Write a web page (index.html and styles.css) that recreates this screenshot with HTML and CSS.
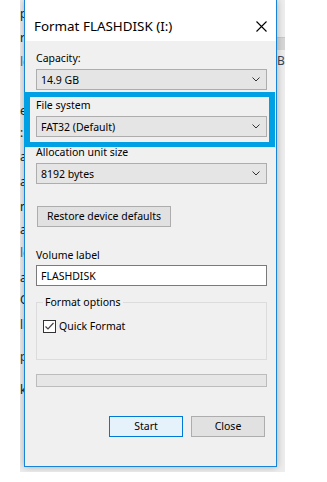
FILE: index.html
```html
<!DOCTYPE html>
<html lang="en">

<head>
    <meta charset="UTF-8">
    <meta name="viewport" content="width=device-width, initial-scale=1">
    <title>Format FLASHDISK (I:)</title>
    <link rel="stylesheet" href="styles.css">
</head>

<body>
<div class="desk">
    <!-- window behind the dialog, only its edges show -->
    <div class="peek-left">
        <span>p</span>
        <span>r</span>
        <span class="link">lc</span>
        <span>e</span>
        <span>:</span>
        <span>a</span>
        <span>a</span>
        <span>n</span>
        <span>a</span>
        <span class="link">lc</span>
        <span>a</span>
        <span>O</span>
        <span class="warn">ll</span>
        <span class="warn">p|</span>
        <span>k</span>
    </div>

    <div class="dialog">
        <div class="dialog-title">
            <span>Format FLASHDISK (I:)</span>
            <svg class="closeTag" width="11" height="11" viewBox="0 0 11 11">
                <path d="M0.5 0.5 L10.5 10.5 M10.5 0.5 L0.5 10.5" stroke="#000" stroke-width="1.1" fill="none"/>
            </svg>
        </div>

        <div class="dialog-content">
            <div class="field">
                <div class="label">Capacity:</div>
                <div class="combo">
                    <span>14.9 GB</span>
                    <svg width="8" height="5" viewBox="0 0 8 5"><polyline points="0.5,0.5 4,4 7.5,0.5" fill="none" stroke="#333" stroke-width="1"/></svg>
                </div>
            </div>

            <div class="field marked">
                <div class="label">File system</div>
                <div class="combo">
                    <span>FAT32 (Default)</span>
                    <svg width="8" height="5" viewBox="0 0 8 5"><polyline points="0.5,0.5 4,4 7.5,0.5" fill="none" stroke="#333" stroke-width="1"/></svg>
                </div>
            </div>

            <div class="field">
                <div class="label">Allocation unit size</div>
                <div class="combo">
                    <span>8192 bytes</span>
                    <svg width="8" height="5" viewBox="0 0 8 5"><polyline points="0.5,0.5 4,4 7.5,0.5" fill="none" stroke="#333" stroke-width="1"/></svg>
                </div>
            </div>

            <button class="btn restore">Restore device defaults</button>

            <div class="label volume">Volume label</div>
            <div class="textbox">FLASHDISK</div>

            <fieldset class="options">
                <legend>Format options</legend>
                <label class="check">
                    <svg width="13" height="13" viewBox="0 0 13 13">
                        <rect x="0.5" y="0.5" width="12" height="12" fill="#fff" stroke="#333"/>
                        <polyline points="2.5,6.5 5,9 10.5,3" fill="none" stroke="#444" stroke-width="1.2"/>
                    </svg>
                    Quick Format
                </label>
            </fieldset>

            <div class="progress"></div>

            <div class="actions">
                <button class="btn start">Start</button>
                <button class="btn">Close</button>
            </div>
        </div>
    </div>

    <div class="peek-right">
        <div class="band"></div>
        <span>B</span>
    </div>
</div>
</body>

</html>
```

FILE: styles.css
```css
body {
    margin: 0;
    background-color: #fff;
    font-family: "Noto Sans", "Liberation Sans", sans-serif;
    font-size: 10.5px;
    color: #000;
}

.desk {
    width: 265px;
    height: 472px;
    margin-left: 20px;
    background-color: #ededed;
    display: flex;
    overflow: hidden;
}

/* left edge of the window underneath */
.peek-left {
    width: 4px;
    flex-shrink: 0;
    overflow: hidden;
    padding-top: 7px;
    display: flex;
    flex-direction: column;
    font-size: 12px;
    line-height: 14px;
    color: #222;
}

.peek-left span {
    white-space: nowrap;
}

.peek-left span:nth-child(1) { height: 24px; }
.peek-left span:nth-child(2) { height: 24px; }
.peek-left span:nth-child(3) { height: 49px; }
.peek-left span:nth-child(4) { height: 22px; }
.peek-left span:nth-child(5) { height: 24px; }
.peek-left span:nth-child(6) { height: 25px; }
.peek-left span:nth-child(7) { height: 25px; }
.peek-left span:nth-child(8) { height: 23px; }
.peek-left span:nth-child(9) { height: 23px; }
.peek-left span:nth-child(10) { height: 25px; }
.peek-left span:nth-child(11) { height: 22px; }
.peek-left span:nth-child(12) { height: 25px; }
.peek-left span:nth-child(13) { height: 32px; }
.peek-left span:nth-child(14) { height: 33px; }

.peek-left .link {
    color: #2a6fb8;
}

.peek-left .warn {
    color: #5a1a2a;
}

.peek-right {
    flex: 1;
    padding-top: 37px;
    overflow: hidden;
    font-size: 12px;
    color: #3b4656;
}

.band {
    height: 12px;
    background-color: #d6d6d6;
    border-top: 1px solid #c9c9c9;
    margin-bottom: 4px;
}

.peek-right span {
    display: block;
    line-height: 14px;
}

/* dialog window */
.dialog {
    width: 253px;
    height: 467px;
    flex-shrink: 0;
    box-sizing: border-box;
    border: 1px solid #1883d7;
    border-top: none;
    background-color: #f0f0f0;
    box-shadow: 0 0 7px rgba(0, 0, 0, 0.28);
    display: flex;
    flex-direction: column;
    position: relative;
    z-index: 1;
}

.dialog-title {
    height: 41px;
    box-sizing: border-box;
    padding: 11px 9px 0 9px;
    background-color: #fff;
    display: flex;
    align-items: center;
    justify-content: space-between;
    font-size: 13.4px;
    line-height: 16px;
}

.closeTag {
    display: block;
}

.dialog-content {
    padding: 10px 9px 0 11px;
    display: flex;
    flex-direction: column;
}

.label {
    line-height: 15px;
}

.field {
    display: flex;
    flex-direction: column;
    gap: 3px;
    margin-bottom: 8px;
    position: relative;
}

/* the blue box drawn round File system */
.marked::after {
    content: "";
    position: absolute;
    top: -6px;
    left: -12px;
    right: -8px;
    bottom: -10px;
    border: 5px solid #00a1e4;
    border-left-width: 6px;
    border-right-width: 6px;
    pointer-events: none;
}

.combo {
    height: 21px;
    box-sizing: border-box;
    border: 1px solid #adadad;
    background-color: #e5e5e5;
    padding: 0 6px 0 4px;
    display: flex;
    align-items: center;
    justify-content: space-between;
}

.btn {
    height: 21px;
    box-sizing: border-box;
    border: 1px solid #adadad;
    background-color: #e1e1e1;
    font-family: inherit;
    font-size: 10.5px;
    color: #000;
    padding: 0;
    line-height: 15px;
}

.restore {
    width: 134px;
    margin: 14px 0 0 1px;
}

.volume {
    margin-top: 21px;
}

.textbox {
    height: 21px;
    box-sizing: border-box;
    margin-top: 2px;
    border: 1px solid #7a7a7a;
    background-color: #fff;
    padding-left: 4px;
    display: flex;
    align-items: center;
}

.options {
    margin: 9px 0 0 0;
    padding: 9px 6px 26px 6px;
    border: 1px solid #dcdcdc;
    min-width: 0;
}

.options legend {
    padding: 0 2px;
    line-height: 15px;
}

.check {
    display: flex;
    align-items: center;
    gap: 3px;
    height: 14px;
}

.check svg {
    display: block;
}

.progress {
    height: 13px;
    box-sizing: border-box;
    margin-top: 14px;
    border: 1px solid #bcbcbc;
    background-color: #e6e6e6;
}

.actions {
    margin-top: 29px;
    padding-right: 2px;
    display: flex;
    justify-content: flex-end;
    gap: 8px;
}

.actions .btn {
    width: 74px;
}

.start {
    border-color: #0078d7;
    background-color: #e5f1fb;
}
```
